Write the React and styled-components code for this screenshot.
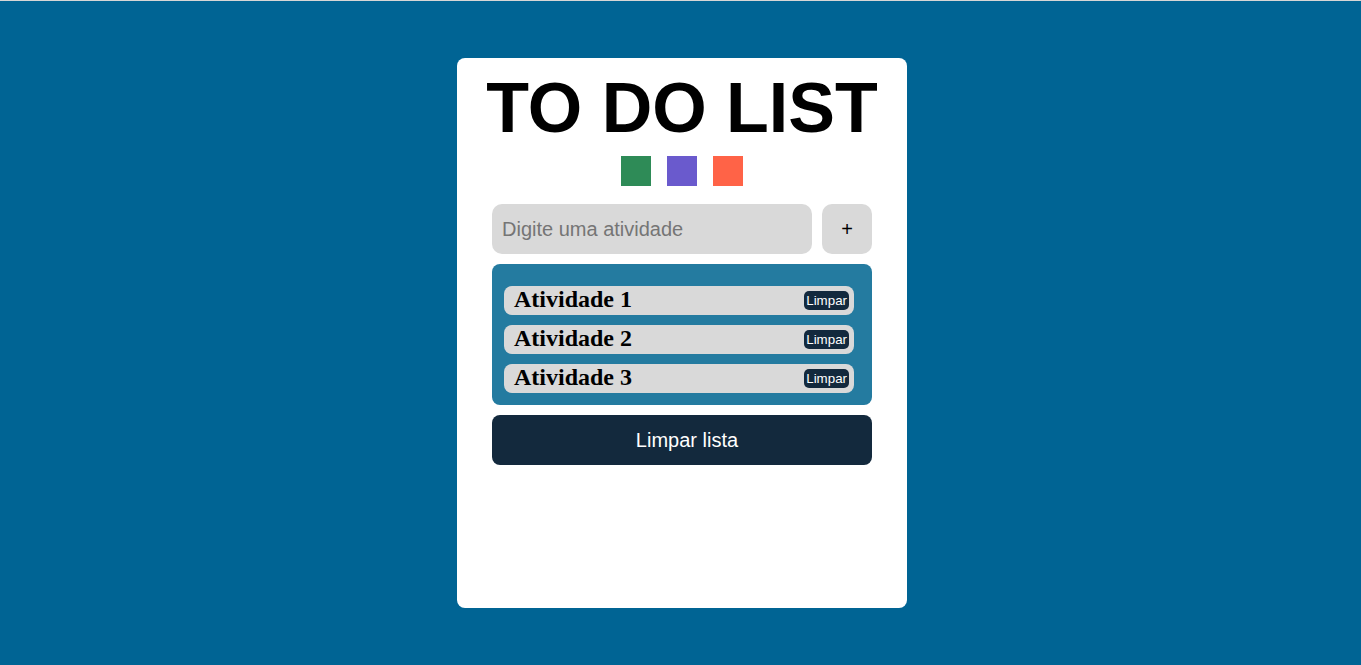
import React from "react";
import styled, { createGlobalStyle } from "styled-components";

const Global = createGlobalStyle`
  html, body { margin: 0; padding: 0; }
  body {
    background: #006494;
    border-top: 1px solid #d6d6d6;
    min-height: 664px;
    font-family: "Liberation Sans", Arial, sans-serif;
  }
`;

const Page = styled.div`
  display: flex;
  justify-content: center;
  padding-top: 57px;
  padding-left: 3px;
`;

const Card = styled.div`
  width: 450px;
  height: 550px;
  background: #ffffff;
  border-radius: 8px;
  display: flex;
  flex-direction: column;
  align-items: center;
  box-sizing: border-box;
  padding-top: 9px;
`;

const Title = styled.h1`
  margin: 0;
  font-family: "Liberation Sans", Arial, sans-serif;
  font-weight: 700;
  font-size: 70px;
  line-height: 83px;
  color: #000;
`;

const Swatches = styled.div`
  display: flex;
  gap: 16px;
  margin-top: 6px;
`;

const Swatch = styled.button`
  width: 30px;
  height: 30px;
  border: none;
  padding: 0;
  background: ${(p) => p.$color};
`;

const InputRow = styled.div`
  display: flex;
  gap: 10px;
  margin-top: 18px;
`;

const Input = styled.input`
  width: 320px;
  height: 50px;
  box-sizing: border-box;
  border: none;
  border-radius: 10px;
  background: #d9d9d9;
  padding: 0 10px;
  font-family: "Liberation Sans", Arial, sans-serif;
  font-size: 20px;
  outline: none;
  &::placeholder { color: #757575; }
`;

const AddButton = styled.button`
  width: 50px;
  height: 50px;
  border: none;
  border-radius: 10px;
  background: #d9d9d9;
  font-family: "Liberation Sans", Arial, sans-serif;
  font-size: 20px;
  color: #000;
`;

const List = styled.ul`
  list-style: none;
  margin: 10px 0 0;
  width: 380px;
  box-sizing: border-box;
  padding: 22px 18px 12px 12px;
  background: #247ba0;
  border-radius: 8px;
  display: flex;
  flex-direction: column;
  gap: 10px;
`;

const Item = styled.li`
  height: 29px;
  box-sizing: border-box;
  background: #d9d9d9;
  border-radius: 8px;
  display: flex;
  align-items: center;
  justify-content: space-between;
  padding: 0 5px 2px 10px;
`;

const ItemText = styled.span`
  font-family: "Liberation Serif", "Times New Roman", serif;
  font-weight: 700;
  font-size: 24px;
  color: #000;
`;

const SmallButton = styled.button`
  height: 19px;
  margin-top: 2px;
  border: none;
  border-radius: 5px;
  background: #13293d;
  color: #fff;
  font-family: "Liberation Sans", Arial, sans-serif;
  font-size: 13.333px;
  padding: 0 2px;
  line-height: 19px;
`;

const ClearButton = styled.button`
  width: 380px;
  height: 50px;
  margin-top: 10px;
  border: none;
  border-radius: 8px;
  background: #13293d;
  color: #fff;
  font-family: "Liberation Sans", Arial, sans-serif;
  font-size: 20px;
  padding: 0 0 0 10px;
`;

const items = ["Atividade 1", "Atividade 2", "Atividade 3"];

export default function App() {
  return (
    <>
      <Global />
      <Page>
        <Card>
          <Title>TO DO LIST</Title>
          <Swatches>
            <Swatch $color="#2e8b57" />
            <Swatch $color="#6a5acd" />
            <Swatch $color="#ff6347" />
          </Swatches>
          <InputRow>
            <Input placeholder="Digite uma atividade" />
            <AddButton>+</AddButton>
          </InputRow>
          <List>
            {items.map((t) => (
              <Item key={t}>
                <ItemText>{t}</ItemText>
                <SmallButton>Limpar</SmallButton>
              </Item>
            ))}
          </List>
          <ClearButton>Limpar lista</ClearButton>
        </Card>
      </Page>
    </>
  );
}
